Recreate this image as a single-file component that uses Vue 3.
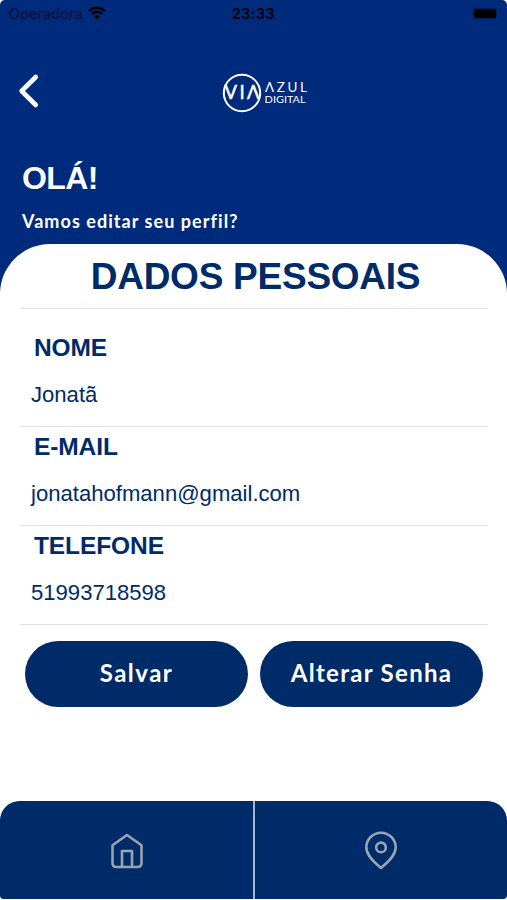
<template>
  <div class="screen">
    <header class="header">
      <div class="status-bar">
        <div class="carrier">
          <span class="carrier-name">Operadora</span>
          <svg class="wifi" width="18" height="14" viewBox="0 0 18 14">
            <path d="M1 5 A11.3 11.3 0 0 1 17 5" />
            <path d="M3.8 8 A7.3 7.3 0 0 1 14.2 8" />
            <path class="wifi-dot" d="M9 13.3 L6.1 10.4 A4.1 4.1 0 0 1 11.9 10.4 Z" />
          </svg>
        </div>
        <span class="clock">23:33</span>
        <span class="battery"></span>
      </div>

      <div class="nav">
        <button class="back" aria-label="Voltar">
          <svg width="22" height="36" viewBox="0 0 22 36">
            <path d="M17.8 4 L3.6 18 L17.8 32" />
          </svg>
        </button>
        <svg class="logo" width="86" height="42" viewBox="0 0 86 42">
          <circle cx="20" cy="21" r="18.2" />
          <text class="logo-via" x="2.6" y="27.4" textLength="35" lengthAdjust="spacing">VIΛ</text>
          <text class="logo-azul" x="43" y="20.1" textLength="42" lengthAdjust="spacing">ΛZUL</text>
          <text class="logo-digital" x="42.6" y="31.4" textLength="41" lengthAdjust="spacingAndGlyphs">DIGITAL</text>
        </svg>
      </div>

      <h1 class="greeting">OLÁ!</h1>
      <p class="subtitle">Vamos editar seu perfil?</p>
    </header>

    <main class="sheet">
      <h2 class="title">DADOS PESSOAIS</h2>
      <div v-for="field in fields" :key="field.label" class="field">
        <span class="label">{{ field.label }}</span>
        <span class="value">{{ field.value }}</span>
      </div>
      <div class="actions">
        <button class="action save">Salvar</button>
        <button class="action password">Alterar Senha</button>
      </div>
    </main>

    <nav class="tabs">
      <button class="tab home" aria-label="Início">
        <svg width="34" height="36" viewBox="0 0 34 36">
          <path d="M17 2 L2.5 12.2 V30 Q2.5 34 6.5 34 H27.5 Q31.5 34 31.5 30 V12.2 Z" />
          <path d="M12 34 V18 H22 V34" />
        </svg>
      </button>
      <button class="tab" aria-label="Mapa">
        <svg width="34" height="40" viewBox="0 0 34 40">
          <path d="M17 38 C12 33.6 2.3 26 2.3 17.4 A14.7 14.7 0 0 1 31.7 17.4 C31.7 26 22 33.6 17 38 Z" />
          <circle cx="17" cy="17.4" r="4.8" />
        </svg>
      </button>
    </nav>
  </div>
</template>

<script setup>
import { ref } from 'vue'

const fields = ref([
  { label: 'NOME', value: 'Jonatã' },
  { label: 'E-MAIL', value: 'jonatahofmann@gmail.com' },
  { label: 'TELEFONE', value: '51993718598' }
])
</script>

<style>
body {
  margin: 0;
  background: #fff;
}
</style>

<style scoped>
.screen {
  display: flex;
  flex-direction: column;
  width: 507px;
  height: 900px;
  overflow: hidden;
  background: #fff;
  font-family: "Liberation Sans", Arial, sans-serif;
}

button {
  border: 0;
  padding: 0;
  background: none;
}

svg {
  display: block;
}

/* Header */
.header {
  box-sizing: border-box;
  flex: none;
  height: 292px;
  background: #002a7b;
  border-radius: 5px 5px 0 0;
  color: #fff;
}

.status-bar {
  display: grid;
  grid-template-columns: 1fr auto 1fr;
  align-items: center;
  height: 27px;
  padding: 0 11px 0 9px;
  font-family: Inter, sans-serif;
  font-size: 14px;
  color: #000;
}

.carrier {
  display: flex;
  align-items: center;
  gap: 5px;
}

.carrier-name {
  color: #000d31;
  letter-spacing: 0.35px;
}

.wifi {
  margin-top: -2px;
  fill: none;
  stroke: #000;
  stroke-width: 2.4;
}

.wifi .wifi-dot {
  fill: #000;
  stroke: none;
}

.clock {
  padding-left: 2px;
  font-weight: 600;
  letter-spacing: 0.6px;
}

.battery {
  justify-self: end;
  width: 22px;
  height: 9px;
  border-radius: 2px;
  background: #000;
  box-shadow: 0 0 2px #000;
}

.nav {
  display: flex;
  align-items: center;
  gap: 182px;
  height: 42px;
  padding: 45px 0 0 18px;
}

.back {
  width: 22px;
  margin-top: -5px;
}

.back path {
  fill: none;
  stroke: #fff;
  stroke-width: 4.6;
  stroke-linecap: round;
  stroke-linejoin: round;
}

.logo circle {
  fill: none;
  stroke: #fff;
  stroke-width: 2;
}

.logo text {
  fill: #fff;
  font-family: Lato, "Open Sans", sans-serif;
}

.logo .logo-via {
  font-size: 18.5px;
  stroke: #fff;
  stroke-width: 0.5;
}

.logo .logo-azul {
  font-size: 13.5px;
}

.logo .logo-digital {
  font-size: 10.2px;
}

.greeting {
  margin: 46px 0 0 22px;
  font-size: 32px;
  line-height: 36px;
  letter-spacing: -0.6px;
}

.subtitle {
  margin: 13px 0 0 22px;
  font-family: Lato, sans-serif;
  font-size: 18px;
  font-weight: 700;
  line-height: 24px;
  letter-spacing: 1.05px;
}

/* White sheet */
.sheet {
  flex: 1;
  margin-top: -48px;
  padding: 0 19px 0 20px;
  background: #fff;
  border-radius: 50px 50px 0 0;
  color: #002b69;
}

.title {
  height: 64px;
  margin: 0;
  border-bottom: 1px solid #e6e6e6;
  font-size: 37px;
  line-height: 65px;
  letter-spacing: -0.25px;
  text-align: center;
  text-indent: 3px;
}

.field {
  display: flex;
  flex-direction: column;
  height: 98px;
  border-bottom: 1px solid #e2e2e2;
}

.title + .field {
  padding-top: 19px;
}

.label {
  margin-left: 14px;
  font-size: 24.5px;
  font-weight: 700;
  line-height: 40px;
  letter-spacing: -0.1px;
}

.value {
  margin: 12px 0 0 11px;
  font-size: 22.1px;
  line-height: 30px;
}

.actions {
  display: flex;
  gap: 12px;
  padding: 16px 5px 0 5px;
}

.action {
  flex: 1;
  height: 66px;
  padding-bottom: 3px;
  border-radius: 33px;
  background: #002b69;
  color: #fff;
  font-family: Lato, sans-serif;
  font-size: 24px;
  font-weight: 700;
}

.save {
  letter-spacing: 1.5px;
}

.password {
  letter-spacing: 1.3px;
}

/* Bottom bar */
.tabs {
  display: flex;
  flex: none;
  gap: 2px;
  height: 98px;
  margin-bottom: 1px;
  border-radius: 20px 20px 4px 4px;
  background: #a9b5ca;
  overflow: hidden;
}

.tab {
  display: flex;
  flex: 1;
  align-items: center;
  justify-content: center;
  background: #002b69;
}

.home {
  padding: 1px 0 0 1px;
}

.tab svg {
  fill: none;
  stroke: #99a3b3;
  stroke-width: 2.6;
  stroke-linejoin: round;
}
</style>
